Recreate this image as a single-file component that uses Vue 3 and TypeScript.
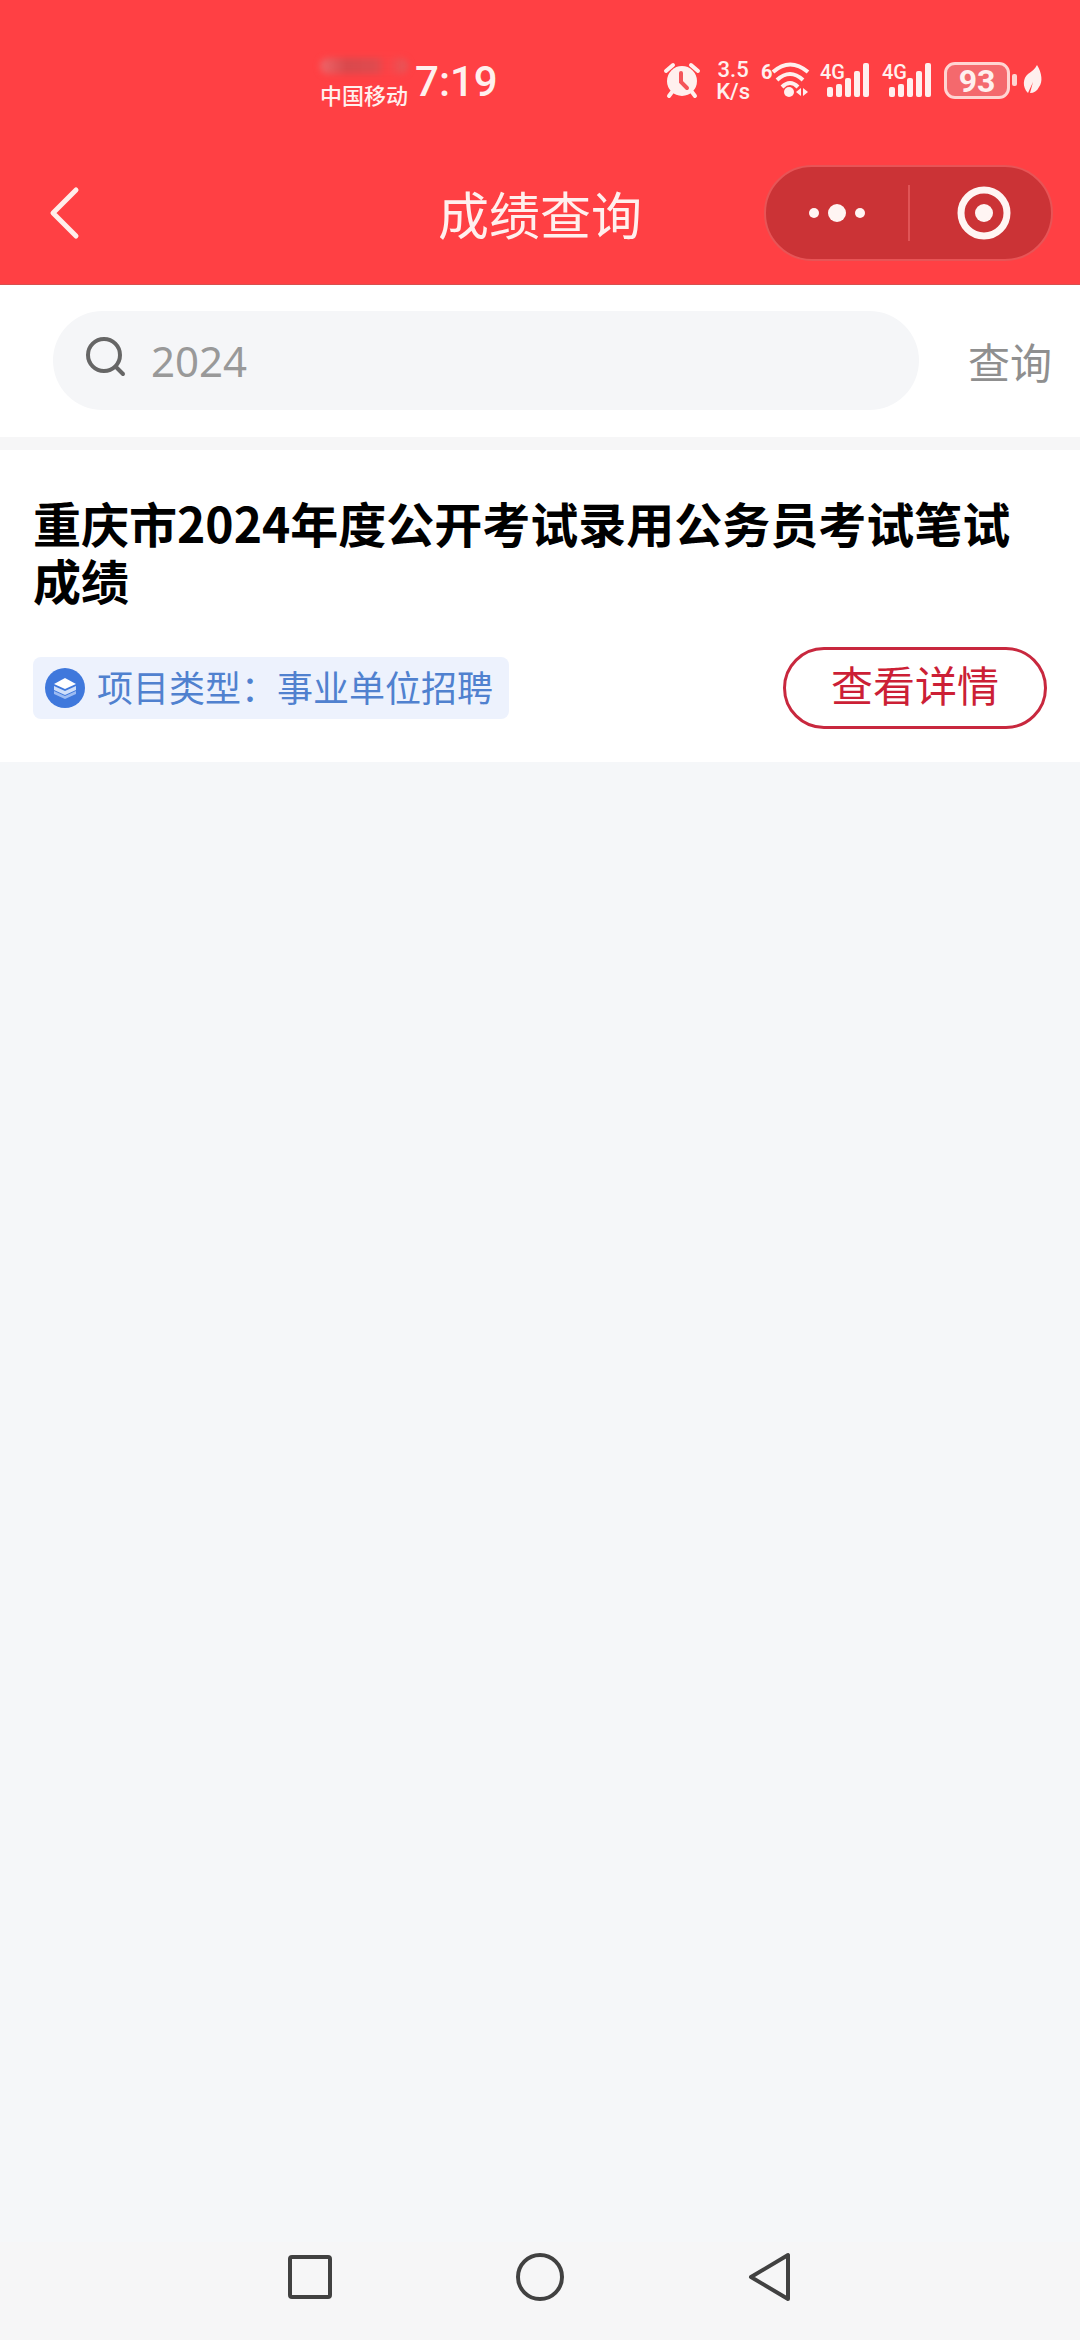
<script setup lang="ts">
import { ref } from 'vue'

interface ResultItem {
  id: number
  title: string
  kind: string
}

const keyword = ref('2024')
const signals = ['sim1', 'sim2']
const bars = [
  { x: 7, h: 10 },
  { x: 16, h: 13 },
  { x: 25, h: 19 },
  { x: 34, h: 26 },
  { x: 43, h: 34 },
]
const results: ResultItem[] = [
  { id: 1, title: '重庆市2024年度公开考试录用公务员考试笔试成绩', kind: '事业单位招聘' },
]
</script>

<template>
  <div class="page">
    <header class="top">
      <div class="status">
        <div class="carrier">
          <span class="smudge" aria-hidden="true"></span>
          <span>中国移动</span>
        </div>
        <time class="clock">7:19</time>
        <div class="indicators">
          <svg class="alarm" width="36" height="36" viewBox="0 0 36 36" aria-hidden="true">
            <circle cx="18" cy="19" r="15" fill="#fff0ee" />
            <path d="M2 9 9 3M34 9 27 3" stroke="#fff0ee" stroke-width="4" stroke-linecap="round" />
            <path d="M8 30 5 34M28 30l3 4" stroke="#fff0ee" stroke-width="4" stroke-linecap="round" />
            <path d="M17 11v9l6 6" fill="none" stroke="#f4555a" stroke-width="4" stroke-linecap="round" />
          </svg>
          <div class="speed"><span>3.5</span><span>K/s</span></div>
          <svg class="wifi" width="49" height="36" viewBox="0 0 49 36" aria-hidden="true">
            <text x="0" y="17" font-size="20" font-weight="700" fill="#fff0ee">6</text>
            <g fill="none" stroke="#fff0ee" stroke-width="4">
              <path d="M12 10Q29-5 47 10" />
              <path d="M16 18Q29 6 42 18" />
              <path d="M21 25Q29 17 37 25" />
            </g>
            <circle cx="28" cy="30" r="5" fill="#fff0ee" />
            <path d="M40 26v8l-5-4zM42 26v8l5-4z" fill="#fff0ee" />
          </svg>
          <svg v-for="s in signals" :key="s" class="signal" width="52" height="36" viewBox="0 0 52 36" aria-hidden="true">
            <text x="0" y="17" font-size="20" font-weight="500" fill="#fff0ee">4G</text>
            <rect v-for="b in bars" :key="b.x" :x="b.x" :y="35 - b.h" width="6" :height="b.h" rx="2" fill="#fff0ee" />
          </svg>
          <div class="battery"><span class="level">93</span><i class="tip"></i></div>
          <svg class="leaf" width="20" height="32" viewBox="0 0 20 32" aria-hidden="true">
            <path d="M14 1c5 8 6 17 2 22-2 4-5 6-9 6l3-11-5 11C-1 23 0 14 5 10c4-3 7-5 9-9z" fill="#fff0ee" />
          </svg>
        </div>
      </div>
      <nav class="titlebar">
        <button class="back" type="button" aria-label="返回">
          <svg width="30" height="56" viewBox="0 0 30 56">
            <path d="M28 5 5 28 28 51" fill="none" stroke="#ffeeeb" stroke-width="5" stroke-linecap="round" stroke-linejoin="round" />
          </svg>
        </button>
        <h1>成绩查询</h1>
        <div class="capsule">
          <button class="more" type="button" aria-label="更多">
            <svg width="60" height="56" viewBox="0 0 60 56" fill="#fff5f3">
              <circle cx="7" cy="28" r="5" /><circle cx="30" cy="28" r="9" /><circle cx="53" cy="28" r="5" />
            </svg>
          </button>
          <span class="divider"></span>
          <button class="close" type="button" aria-label="关闭">
            <svg width="56" height="56" viewBox="0 0 56 56">
              <circle cx="28" cy="28" r="23" fill="none" stroke="#fff5f3" stroke-width="7" />
              <circle cx="28" cy="28" r="9" fill="#fff5f3" />
            </svg>
          </button>
        </div>
      </nav>
    </header>

    <form class="search" @submit.prevent>
      <label class="field">
        <svg width="42" height="42" viewBox="0 0 42 42" aria-hidden="true">
          <g fill="none" stroke="#666" stroke-width="4" stroke-linecap="round">
            <circle cx="19" cy="19" r="16" />
            <path d="m31 31 7 7" />
          </g>
        </svg>
        <input v-model="keyword" type="text" aria-label="搜索" />
      </label>
      <button class="query" type="submit">查询</button>
    </form>

    <main>
      <article v-for="r in results" :key="r.id" class="card">
        <h2>{{ r.title }}</h2>
        <div class="row">
          <div class="chip">
            <svg width="40" height="40" viewBox="0 0 40 40" aria-hidden="true">
              <circle cx="20" cy="20" r="20" fill="#3f78dc" />
              <path d="M20 10 31 16 20 21 9 16z" fill="#fff" />
              <path d="M9 18 20 23l11-5v4L20 27 9 22z" fill="#cfdffa" />
              <path d="M9 23 20 28 31 23v3L20 31 9 26z" fill="#9dbcf2" />
            </svg>
            <span>项目类型：{{ r.kind }}</span>
          </div>
          <button class="detail" type="button">查看详情</button>
        </div>
      </article>
    </main>

    <footer class="sysnav">
      <button type="button" aria-label="最近任务">
        <svg width="48" height="48" viewBox="0 0 48 48"><rect x="4" y="4" width="40" height="40" rx="2" /></svg>
      </button>
      <button type="button" aria-label="主屏幕">
        <svg width="48" height="48" viewBox="0 0 48 48"><circle cx="24" cy="24" r="22" /></svg>
      </button>
      <button type="button" aria-label="后退">
        <svg width="48" height="48" viewBox="0 0 48 48"><path d="M5 24 42 2V46z" /></svg>
      </button>
    </footer>
  </div>
</template>

<style>
body {
  margin: 0;
  background: #f5f7f9;
}
</style>

<style scoped>
.page {
  display: flex;
  flex-direction: column;
  min-height: 100vh;
  background: #f5f7f9;
  font-family: "Noto Sans CJK SC", sans-serif;
}
button {
  display: flex;
  align-items: center;
  justify-content: center;
  padding: 0;
  border: 0;
  background: none;
  font-family: inherit;
}
svg {
  display: block;
  flex: none;
  overflow: visible;
}
h1,
h2 {
  margin: 0;
}
.top {
  background: #ff4044;
  border-bottom: 1px solid #d8504f;
  color: #fff0ee;
}
.status {
  display: flex;
  align-items: center;
  padding: 48px 37px 0 320px;
  height: 64px;
}
.carrier {
  display: flex;
  flex-direction: column;
  gap: 6px;
  padding-top: 6px;
  font-size: 22px;
  line-height: 28px;
  font-weight: 500;
}
.smudge {
  width: 88px;
  height: 16px;
  border-radius: 8px;
  background: linear-gradient(90deg, #f0666a, #d9484c 30%, #e04b4f 65%, #ff4044 75%, #e2585b);
  filter: blur(3px);
}
.clock {
  margin-left: 7px;
  padding-top: 4px;
  font-family: Roboto, sans-serif;
  font-size: 42px;
  line-height: 48px;
  font-weight: 500;
}
.indicators {
  display: flex;
  align-items: center;
  margin-left: auto;
  font-family: Roboto, sans-serif;
}
.speed {
  display: flex;
  flex-direction: column;
  align-items: center;
  margin: 0 11px 0 16px;
  padding-top: 2px;
  font-size: 22px;
  line-height: 22px;
  font-weight: 500;
}
.signal {
  margin-left: 10px;
}
.battery {
  display: flex;
  align-items: center;
  gap: 2px;
  margin: 0 6px 0 10px;
}
.level {
  box-sizing: border-box;
  width: 66px;
  height: 37px;
  border: 3px solid #ffd5d2;
  border-radius: 11px;
  background: #f4696d;
  font-size: 32px;
  line-height: 32px;
  font-weight: 700;
  text-align: center;
}
.tip {
  width: 5px;
  height: 12px;
  border-radius: 2px;
  background: #ffd5d2;
}
.titlebar {
  display: grid;
  grid-template-columns: 1fr auto 1fr;
  align-items: center;
  padding: 53px 27px 23px 48px;
}
.back {
  justify-self: start;
}
h1 {
  padding-right: 21px;
  font-size: 51px;
  line-height: 60px;
  font-weight: 400;
}
.capsule {
  justify-self: end;
  display: flex;
  align-items: center;
  box-sizing: border-box;
  width: 289px;
  height: 96px;
  border: 2px solid #e85456;
  border-radius: 48px;
  background: #cb3336;
}
.more {
  flex: 1;
}
.close {
  width: 141px;
  padding-left: 6px;
}
.divider {
  width: 2px;
  height: 56px;
  background: #e05456;
}
.search {
  display: flex;
  align-items: center;
  padding: 26px 28px 27px 53px;
  border-bottom: 13px solid #f6f6f7;
  background: #fff;
}
.field {
  flex: 1;
  display: flex;
  align-items: center;
  box-sizing: border-box;
  min-width: 0;
  height: 99px;
  padding: 0 32px;
  gap: 24px;
  border-radius: 50px;
  background: #f5f6f8;
}
.field svg {
  margin-bottom: 8px;
}
input {
  flex: 1;
  min-width: 0;
  padding: 0;
  border: 0;
  outline: 0;
  background: none;
  color: #999;
  font-family: "Noto Sans", "Noto Sans CJK SC", sans-serif;
  font-size: 42px;
  line-height: 60px;
}
.query {
  margin-left: 49px;
  color: #8f8f8f;
  font-size: 42px;
  line-height: 60px;
}
.card {
  padding: 44px 33px 33px;
  background: #fff;
}
h2 {
  color: #000;
  font-size: 48px;
  line-height: 57px;
  font-weight: 700;
}
.row {
  display: flex;
  align-items: center;
  justify-content: space-between;
  margin-top: 39px;
}
.chip {
  display: flex;
  align-items: center;
  gap: 12px;
  padding: 2px 16px 2px 12px;
  border-radius: 8px;
  background: #edf2fd;
  color: #5081cf;
  font-size: 36px;
  line-height: 54px;
}
.chip span {
  padding-bottom: 4px;
}
.detail {
  box-sizing: border-box;
  width: 264px;
  height: 82px;
  padding-bottom: 8px;
  border: 3px solid #c8283e;
  border-radius: 41px;
  color: #cc1f36;
  font-size: 42px;
  line-height: 60px;
}
.sysnav {
  display: flex;
  justify-content: center;
  gap: 182px;
  margin-top: auto;
  padding: 11px 0 39px;
  background: #f6f6f7;
}
.sysnav svg {
  fill: none;
  stroke: #414141;
  stroke-width: 4;
  stroke-linejoin: round;
}
</style>
